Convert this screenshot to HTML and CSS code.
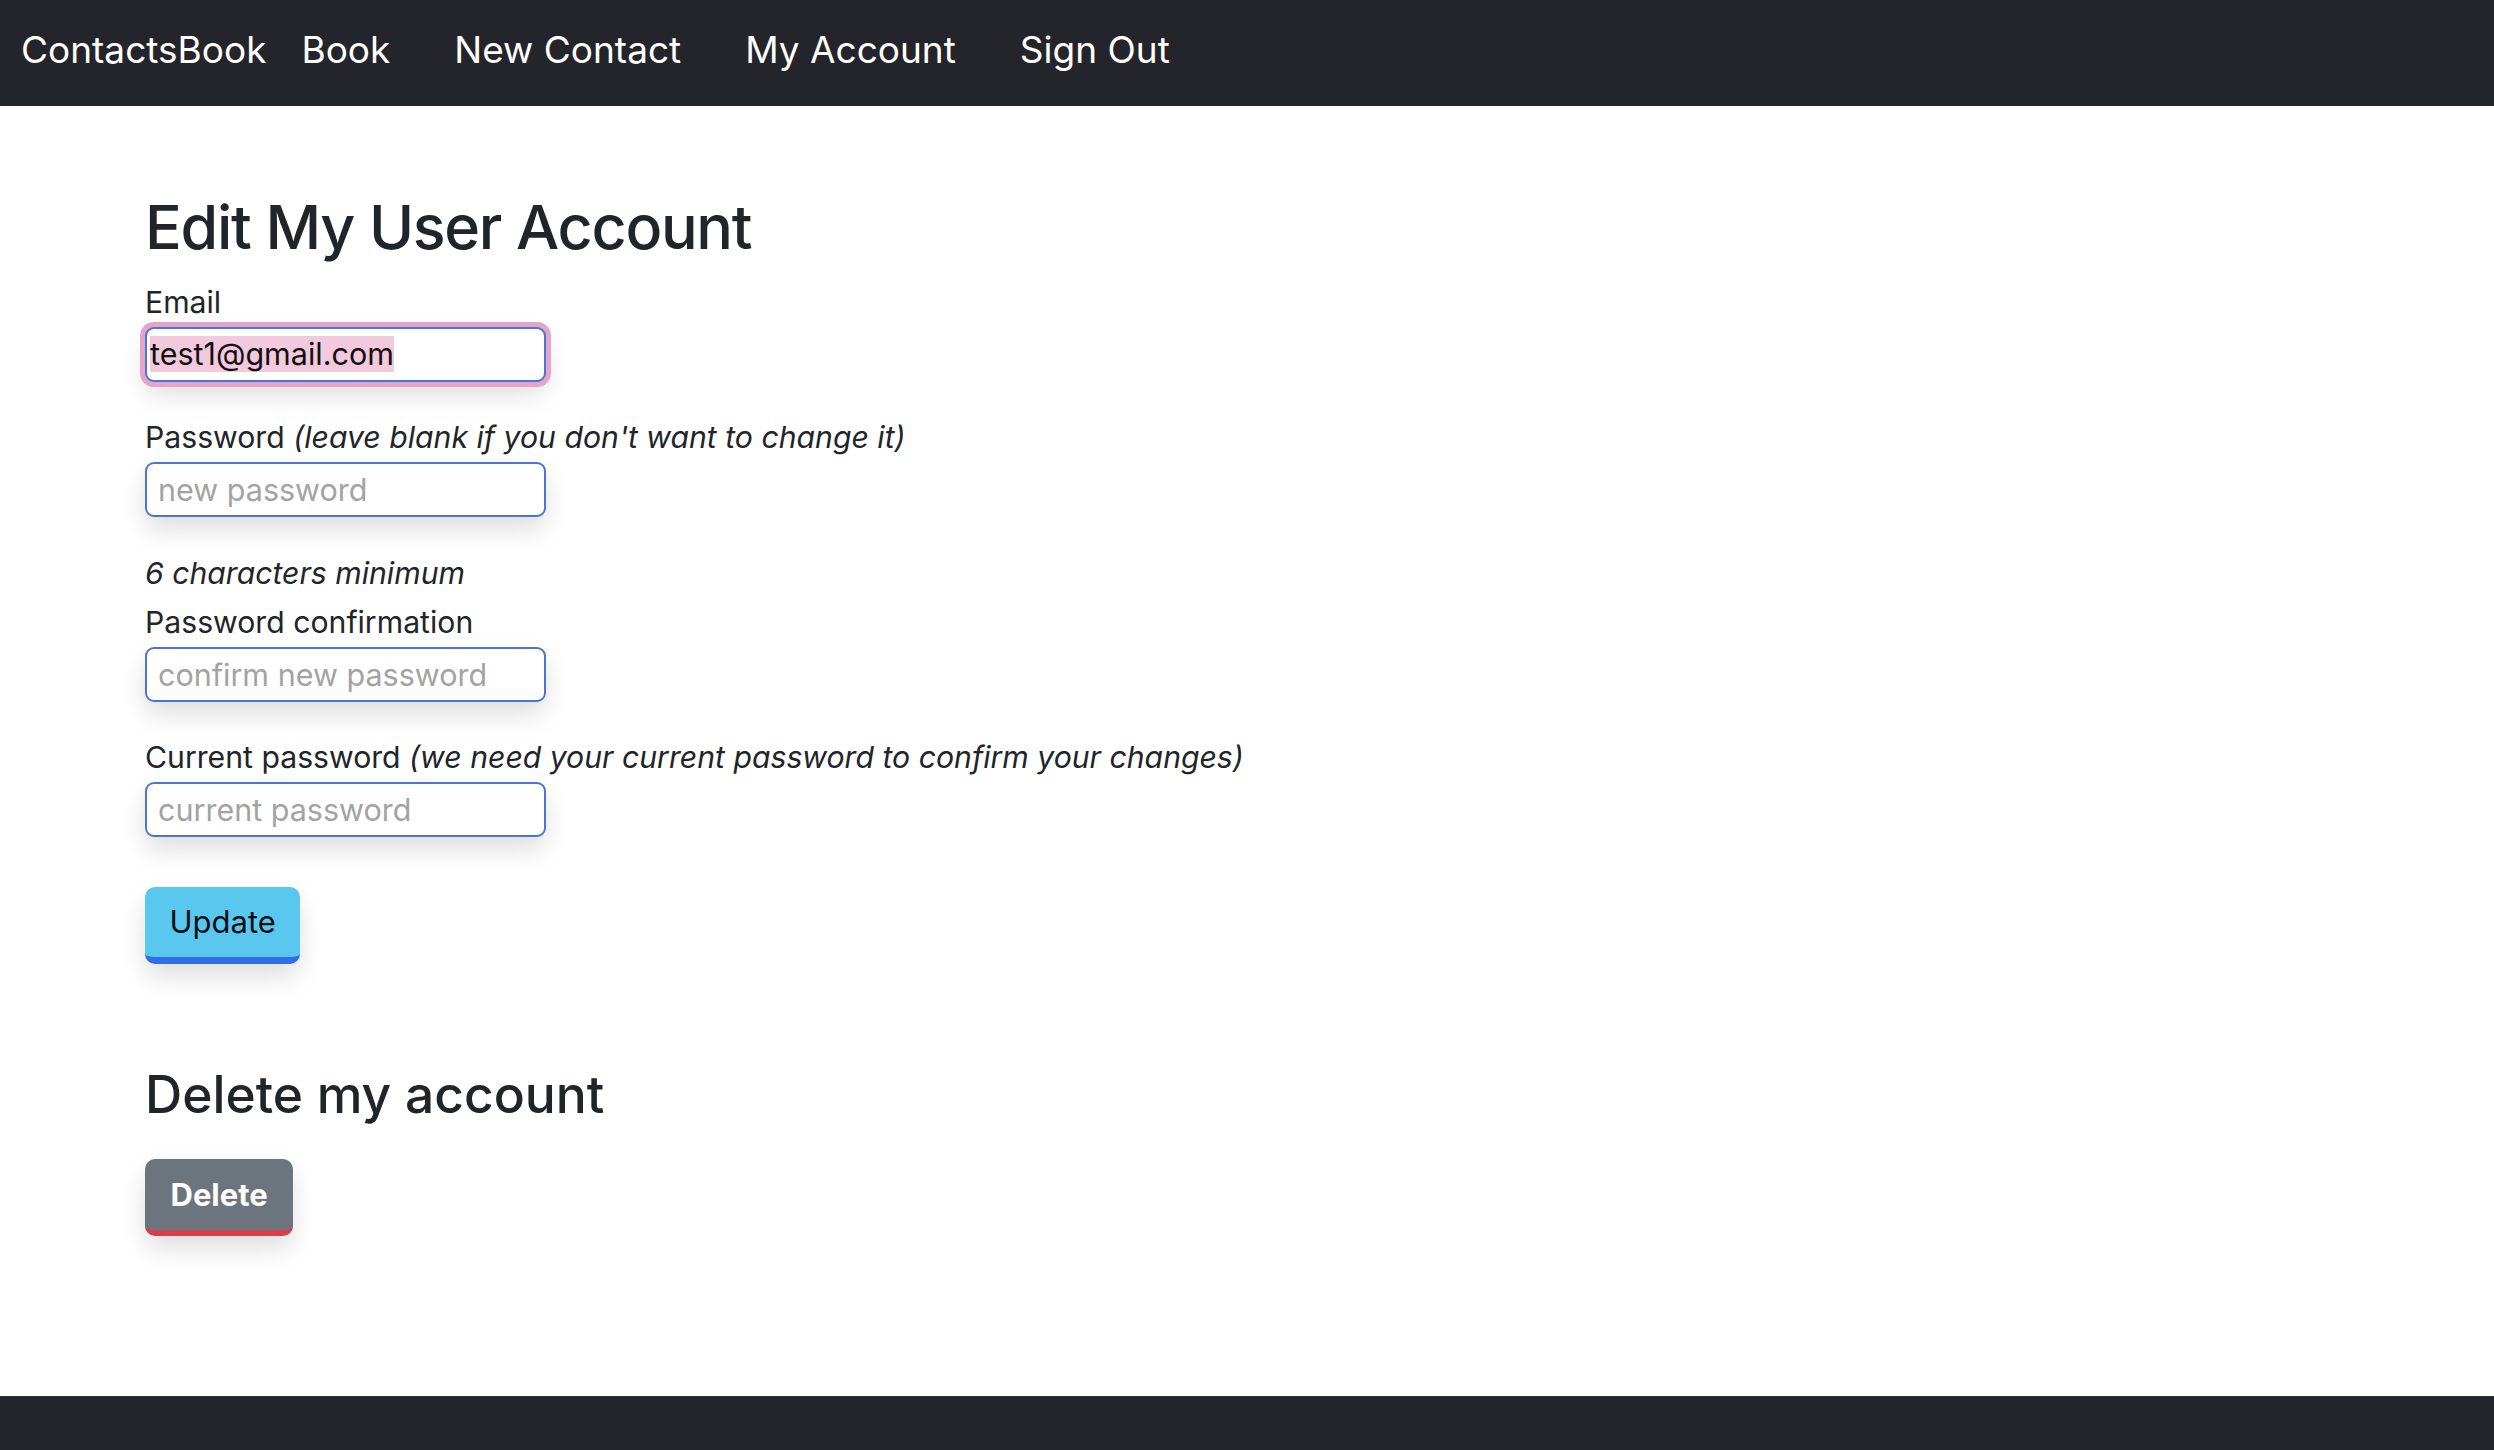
FILE: index.html
```html
<!DOCTYPE html>
<html lang="en">
<head>
<meta charset="utf-8">
<title>ContactsBook</title>
<link rel="stylesheet" href="styles.css">
</head>
<body>
<nav class="navbar">
  <a class="brand" href="#">ContactsBook</a>
  <ul class="nav-links">
    <li><a href="#">Book</a></li>
    <li><a href="#">New Contact</a></li>
    <li><a href="#">My Account</a></li>
    <li><a href="#">Sign Out</a></li>
  </ul>
</nav>
<main class="page">
  <h1 class="title">Edit My User Account</h1>
  <form class="account-form">
    <div class="field">
      <label class="field-label">Email</label>
      <div class="input input-focused"><span class="selected-text">test1@gmail.com</span></div>
    </div>
    <div class="field">
      <label class="field-label">Password <em>(leave blank if you don't want to change it)</em></label>
      <input class="input" type="password" placeholder="new password">
    </div>
    <div class="field">
      <em class="hint">6 characters minimum</em>
      <label class="field-label">Password confirmation</label>
      <input class="input" type="password" placeholder="confirm new password">
    </div>
    <div class="field">
      <label class="field-label">Current password <em>(we need your current password to confirm your changes)</em></label>
      <input class="input" type="password" placeholder="current password">
    </div>
    <button type="button" class="btn btn-update">Update</button>
  </form>
  <h2 class="subtitle">Delete my account</h2>
  <button type="button" class="btn btn-delete">Delete</button>
</main>
<footer class="footer"></footer>
</body>
</html>
```

FILE: styles.css
```css
* { box-sizing: border-box; }

html, body { height: 100%; }

body {
  margin: 0;
  font-family: Inter, "Noto Sans", "Liberation Sans", sans-serif;
  color: #212529;
  background: #ffffff;
  display: flex;
  flex-direction: column;
  min-height: 100vh;
}

.navbar {
  height: 106px;
  background: #24252a;
  display: flex;
  align-items: center;
  padding: 0 0 7px 21px;
  flex-shrink: 0;
}

.brand {
  color: #ffffff;
  text-decoration: none;
  font-size: 37px;
  margin-right: 3px;
}

.nav-links {
  list-style: none;
  display: flex;
  margin: 0;
  padding: 0;
}

.nav-links a {
  display: block;
  color: #ffffff;
  text-decoration: none;
  font-size: 37px;
  padding: 0 32px;
}

.page {
  flex: 1;
  padding: 85px 0 0 145px;
}

.title {
  margin: 0 0 17.5px;
  font-size: 61px;
  font-weight: 500;
  line-height: 1.2;
  letter-spacing: -1.3px;
}

.field {
  margin-bottom: 35.5px;
}

.field-label {
  display: block;
  font-size: 30.2px;
  line-height: 40px;
  margin-bottom: 5px;
}

.hint {
  display: block;
  font-size: 30.2px;
  line-height: 40px;
  margin-bottom: 9px;
}

.input {
  display: block;
  width: 401px;
  height: 55px;
  border: 2px solid #4b74d3;
  border-radius: 9px;
  background: #ffffff;
  padding: 0 11px;
  font-family: inherit;
  font-size: 30.5px;
  color: #212529;
  box-shadow: 0 13px 26px rgba(0, 0, 0, 0.13);
  outline: none;
}

.input::placeholder {
  color: #a3a3a3;
}

.input-focused {
  display: flex;
  align-items: center;
  padding: 0 3px;
  box-shadow: 0 0 0 5px #e6a4c8, 0 13px 26px rgba(0, 0, 0, 0.13);
}

.selected-text {
  background: #f3c9dd;
  color: #111111;
  line-height: 36px;
}

.btn {
  display: block;
  font-family: inherit;
  font-size: 31px;
  height: 77px;
  padding: 0 24.5px;
  border: none;
  border-radius: 10px;
  cursor: pointer;
  box-shadow: 0 13px 26px rgba(0, 0, 0, 0.13);
}

.btn-update {
  margin-top: 49.5px;
  background: #5ac7ee;
  color: #0b0f14;
  border-bottom: 7px solid #2f6ee6;
}

.subtitle {
  margin: 100.5px 0 33px;
  font-size: 51.5px;
  font-weight: 500;
  line-height: 1.2;
}

.btn-delete {
  background: #6c757d;
  color: #ffffff;
  font-weight: 700;
  padding: 0 25.5px;
  border-bottom: 6px solid #d5404c;
}

.footer {
  height: 54px;
  background: #24252a;
  border-top: 1px solid #303136;
  flex-shrink: 0;
}
```
